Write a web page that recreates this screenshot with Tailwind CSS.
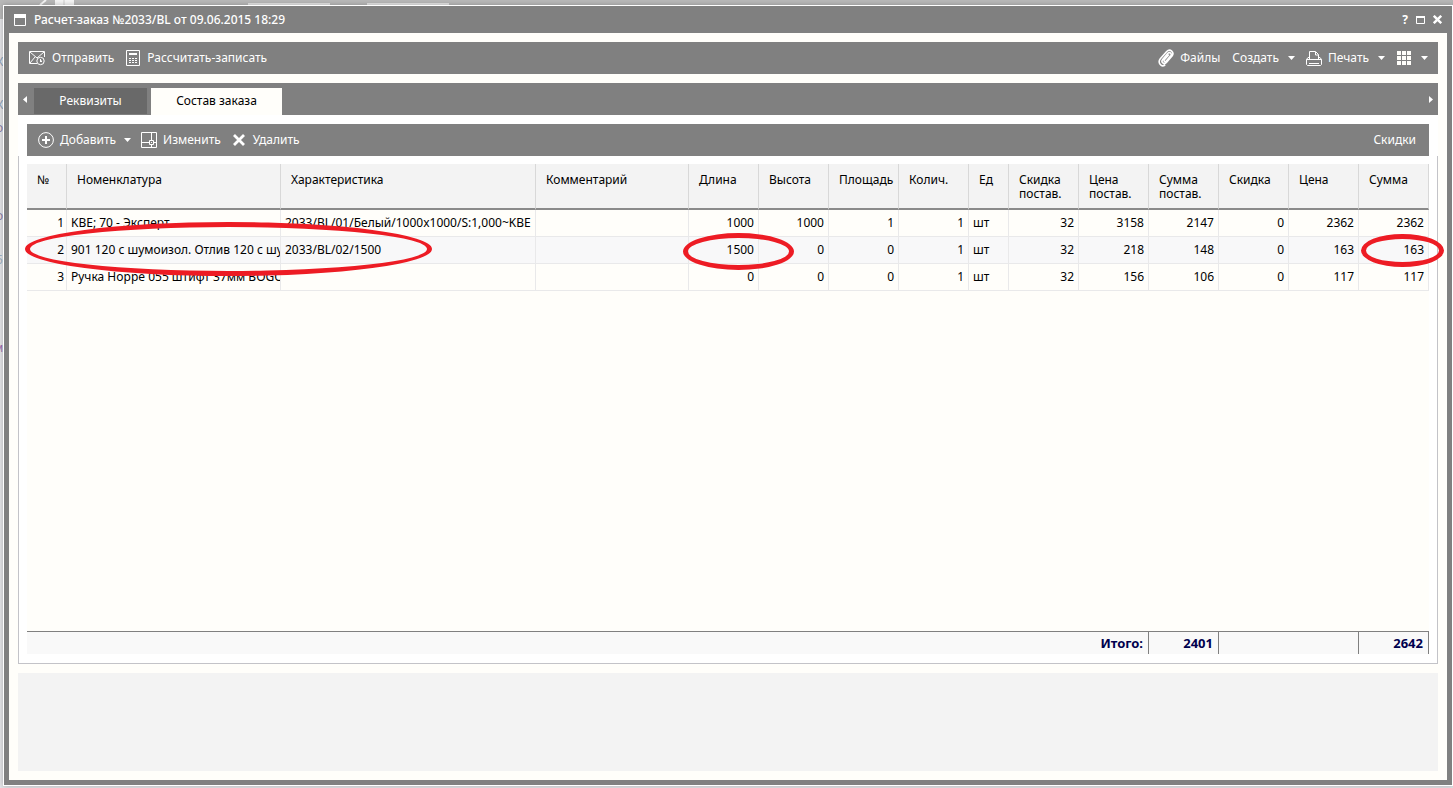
<!DOCTYPE html>
<html lang="ru">
<head>
<meta charset="utf-8">
<title>Расчет-заказ №2033/BL</title>
<script src="https://cdn.jsdelivr.net/npm/@tailwindcss/browser@4"></script>
</head>
<body class="relative h-screen overflow-hidden bg-[#e4e4e7] font-['Noto_Sans',sans-serif] text-xs text-black">

<!-- page behind the window -->
<div class="absolute inset-x-0 top-0 h-[19px] bg-[#b8b8b8]" aria-hidden="true">
  <svg class="absolute left-[36px] top-0" width="420" height="5" viewBox="0 0 420 5"><path d="M4 5 10 0" stroke="#f4f4f4" stroke-width="2"/><path d="M19 0h19v5H19z" fill="#f4f4f4"/><path d="M28 0v5" stroke="#ccc"/><path d="M212 3h82v2h-82zM331 3h82v2h-82z" fill="#e4e4e4"/></svg>
</div>
<div class="absolute left-[-4px] top-[54px] text-[#8fa3b8]" aria-hidden="true">К</div>
<div class="absolute left-[-4px] top-[97px] text-[#8fa3b8]" aria-hidden="true">К</div>
<div class="absolute left-[-4px] top-[120px] text-[#8d7fa8]" aria-hidden="true">о</div>
<div class="absolute left-[-4px] top-[208px] text-[#8d7fa8]" aria-hidden="true">о</div>
<div class="absolute left-[-4px] top-[252px] text-[#9fb0c0]" aria-hidden="true">5</div>
<div class="absolute left-[-6px] top-[340px] text-[#a070b0]" aria-hidden="true">м</div>

<div class="relative h-full pt-[5px] pr-0 pb-[2px] pl-[3px]">
<main class="flex h-full flex-col border border-white bg-[#808080] px-[5px] pb-[5px] shadow-[0_0_5px_rgba(0,0,0,0.25)]">

  <header class="flex h-[27px] shrink-0 items-center px-[5px] text-white">
    <svg class="mr-2" width="12" height="12" viewBox="0 0 12 12" aria-hidden="true"><path d="M.5 .5h11v11H.5z" fill="none" stroke="#fff"/><path d="M0 0h12v4H0z" fill="#fff"/></svg>
    <h1 class="grow font-medium">Расчет-заказ №2033/BL от 09.06.2015 18:29</h1>
    <button class="mr-2 text-xs font-bold" aria-label="Справка">?</button>
    <button class="mr-2" aria-label="Развернуть"><svg width="9" height="8" viewBox="0 0 9 8"><path d="M.5 1h8v6.500h-8z" fill="none" stroke="#fff"/><path d="M0 0h9v2H0z" fill="#fff"/></svg></button>
    <button aria-label="Закрыть"><svg width="9" height="9" viewBox="0 0 9 9"><path d="M.8.8l7.400 7.400M8.200.8L.8 8.200" stroke="#fff" stroke-width="2.400"/></svg></button>
  </header>

  <div class="flex min-h-0 grow flex-col bg-[#fffefa] p-[9px]">

    <div class="flex h-8 shrink-0 items-center bg-[#808080] pr-[10px] pl-[11px] text-white" role="toolbar" aria-label="Заказ">
      <button class="flex items-center gap-[6px]">
        <svg width="17" height="16" viewBox="0 0 17 16" fill="none" stroke="#fff"><path d="M8 13.500H.5v-12h15V7M1 2l7 6 7-6M1 13l5-6"/><circle cx="11.500" cy="11" r="3.700" fill="#808080"/><path d="M11 9h1v1.500h1V12h-2z" fill="#fff" stroke="none"/></svg>
        Отправить</button>
      <button class="ml-3 flex items-center gap-[7px]">
        <svg width="14" height="16" viewBox="0 0 14 16"><path d="M.5 .5h13v15H.5z" fill="none" stroke="#fff"/><path d="M3 3h8v2H3zM3 8h2v1H3zM6 8h2v1H6zM9 8h2v1H9zM3 10h2v1H3zM6 10h2v1H6zM9 10h2v1H9zM3 12h2v1H3zM6 12h2v1H6zM9 12h2v1H9z" fill="#fff"/></svg>
        Рассчитать-записать</button>
      <div class="grow"></div>
      <button class="flex items-center gap-[6px]">
        <svg width="16" height="18" viewBox="0 0 16 18" fill="none" stroke="#fff" stroke-width="1.600" stroke-linecap="round" stroke-linejoin="round"><path d="M10.500 6 6.300 10.700c-1 1.200.8 2.600 1.800 1.500l4.600-5.400c1.600-2-.9-4.400-2.800-2.500L4.700 10.400c-2.200 2.700 1.300 5.700 3.700 3.100L14 7c2.700-3.600-1.800-8-5.300-4.500L2.300 9.800c-3 3.900 1 8.500 4.400 6.400"/></svg>
        Файлы</button>
      <button class="ml-3 flex items-center gap-[9px]">Создать<svg width="7" height="4" viewBox="0 0 7 4"><path d="M0 0h7L3.500 4z" fill="#fff"/></svg></button>
      <button class="ml-[11px] flex items-center gap-[6px]">
        <svg width="16" height="15" viewBox="0 0 16 15" fill="none" stroke="#fff"><path d="M3.500 8V.5h6l3 3V8M9.500 1v3h3M3 6.500H2L.5 8.500v5l1 1h13l1-1v-5L14 6.500h-1M.5 8.500h15M3 12.500h10"/></svg>
        Печать<svg class="ml-[3px]" width="7" height="4" viewBox="0 0 7 4"><path d="M0 0h7L3.500 4z" fill="#fff"/></svg></button>
      <button class="ml-3 flex items-center gap-[10px]" aria-label="Вид">
        <svg width="14" height="14" viewBox="0 0 14 14" fill="#fffefa"><path d="M0 0h4v4H0zM5 0h4v4H5zM10 0h4v4h-4zM0 5h4v4H0zM5 5h4v4H5zM10 5h4v4h-4zM0 10h4v4H0zM5 10h4v4H5zM10 10h4v4h-4z"/></svg>
        <svg width="7" height="4" viewBox="0 0 7 4"><path d="M0 0h7L3.500 4z" fill="#fff"/></svg></button>
    </div>

    <div class="mt-[9px] flex h-8 shrink-0 items-center bg-[#808080] px-[5px] text-white" role="tablist">
      <button class="mr-[7px]" aria-label="Предыдущие вкладки"><svg width="4" height="7" viewBox="0 0 4 7"><path d="M4 0v7L0 3.500z" fill="#fff"/></svg></button>
      <button class="mt-[3px] h-[26px] w-[113px] bg-[#696969]" role="tab">Реквизиты</button>
      <button class="ml-1 h-[27px] w-[131px] self-end bg-[#fffefa] pb-px text-black" role="tab" aria-selected="true">Состав заказа</button>
      <div class="grow"></div>
      <button aria-label="Следующие вкладки"><svg width="4" height="7" viewBox="0 0 4 7"><path d="M0 0v7l4-3.500z" fill="#fff"/></svg></button>
    </div>

    <section class="flex min-h-0 grow flex-col bg-white" role="tabpanel">
      <div class="mx-[9px] mt-[9px] flex h-8 shrink-0 items-center bg-[#808080] pr-[13px] pl-[11px] text-white" role="toolbar" aria-label="Состав">
        <button class="flex items-center gap-[6px]">
          <svg width="16" height="16" viewBox="0 0 16 16" fill="none" stroke="#fff"><circle cx="8" cy="8" r="7.400"/><path d="M8 4v8M4 8h8" stroke-width="2"/></svg>
          Добавить<svg class="ml-[2px]" width="7" height="4" viewBox="0 0 7 4"><path d="M0 0h7L3.500 4z" fill="#fff"/></svg></button>
        <button class="ml-[10px] flex items-center gap-[6px]">
          <svg width="16" height="16" viewBox="0 0 16 16" fill="none" stroke="#fff"><path d="M.5 .5h15v15H.5zM10.500 0v8M0 10.500h8M12.500 10.500H16M10.500 12.500V16M8.500 8.500h4v4h-4z"/><path d="M10 10h1v1h-1z" fill="#fff" stroke="none"/></svg>
          Изменить</button>
        <button class="ml-3 flex items-center gap-2">
          <svg width="12" height="12" viewBox="0 0 12 12"><path d="M1 1l10 10M11 1L1 11" stroke="#fff" stroke-width="2.800"/></svg>
          Удалить</button>
        <div class="grow"></div>
        <button>Скидки</button>
      </div>

      <div class="flex min-h-0 grow flex-col border-x border-b border-[#c3c3c8] px-2 pt-2 pb-[9px]">
        <div class="relative min-h-0 grow bg-[#fffefa]">
          <table class="w-full table-fixed border-separate border-spacing-0 whitespace-nowrap">
            <colgroup><col class="w-[40px]"><col class="w-[214px]"><col class="w-[255px]"><col><col class="w-[70px]"><col class="w-[70px]"><col class="w-[70px]"><col class="w-[70px]"><col class="w-[40px]"><col class="w-[70px]"><col class="w-[70px]"><col class="w-[70px]"><col class="w-[70px]"><col class="w-[70px]"><col class="w-[70px]"></colgroup>
            <thead class="bg-[#f3f3f3]">
              <tr class="h-[46px] text-left align-top leading-[14px] [&>th]:border-r [&>th]:border-b-2 [&>th]:border-r-[#d8d8d8] [&>th]:border-b-[#8a8a8a] [&>th]:pr-0 [&>th]:pl-[10px] [&>th]:pt-[9px] [&>th]:font-normal">
                <th>№</th><th>Номенклатура</th><th>Характеристика</th><th>Комментарий</th><th>Длина</th><th>Высота</th><th>Площадь</th><th>Колич.</th><th>Ед</th><th>Скидка<br>постав.</th><th>Цена<br>постав.</th><th>Сумма<br>постав.</th><th>Скидка</th><th>Цена</th><th>Сумма</th>
              </tr>
            </thead>
            <tbody class="text-right [&_td]:overflow-hidden [&_td]:border-r [&_td]:border-b [&_td]:border-[#e9e9ea] [&_td]:pr-1 [&_td]:pl-1">
              <tr class="h-[27px]"><td class="!pr-[2px]">1</td><td class="!pr-0 text-left">KBE; 70 - Эксперт</td><td class="!pr-0 text-left">2033/BL/01/Белый/1000x1000/S:1,000~KBE</td><td></td><td>1000</td><td>1000</td><td>1</td><td>1</td><td class="text-left">шт</td><td>32</td><td>3158</td><td>2147</td><td>0</td><td>2362</td><td>2362</td></tr>
              <tr class="h-[27px] bg-[#f8f8f9]"><td class="!pr-[2px]">2</td><td class="!pr-0 text-left">901 120 с шумоизол. Отлив 120 с шу</td><td class="!pr-0 text-left">2033/BL/02/1500</td><td></td><td>1500</td><td>0</td><td>0</td><td>1</td><td class="text-left">шт</td><td>32</td><td>218</td><td>148</td><td>0</td><td>163</td><td>163</td></tr>
              <tr class="h-[27px]"><td class="!pr-[2px]">3</td><td class="!pr-0 text-left">Ручка Hoppe 055 штифт 37мм BOGO</td><td></td><td></td><td>0</td><td>0</td><td>0</td><td>1</td><td class="text-left">шт</td><td>32</td><td>156</td><td>106</td><td>0</td><td>117</td><td>117</td></tr>
            </tbody>
          </table>
          <!-- red marker ellipses over the table -->
          <div class="pointer-events-none absolute top-[58px] left-[-2px] h-[54px] w-[407px] rounded-[50%] border-[5px] border-[#ed1c24]"></div>
          <div class="pointer-events-none absolute top-[69px] right-[635px] h-[37px] w-[111px] rounded-[50%] border-[5px] border-[#ed1c24]"></div>
          <div class="pointer-events-none absolute top-[70px] right-[-15px] z-10 h-[33px] w-[83px] rounded-[50%] border-[5px] border-[#ed1c24]"></div>
        </div>
        <table class="w-full shrink-0 table-fixed border-collapse border-t border-[#808080] bg-[#f9f9f9] text-right text-[13px] font-bold text-[#00004e]">
          <colgroup><col><col class="w-[70px]"><col class="w-[140px]"><col class="w-[70px]"></colgroup>
          <tbody><tr class="h-[23px] leading-[18px] [&>*]:border-r [&>*]:border-[#808080] [&>*]:pr-[5px]"><th scope="row">Итого:</th><td>2401</td><td></td><td>2642</td></tr></tbody>
        </table>
      </div>
    </section>

    <div class="mt-[9px] h-[98px] shrink-0 bg-[#f3f3f3]"></div>
  </div>
</main>
</div>
</body>
</html>
